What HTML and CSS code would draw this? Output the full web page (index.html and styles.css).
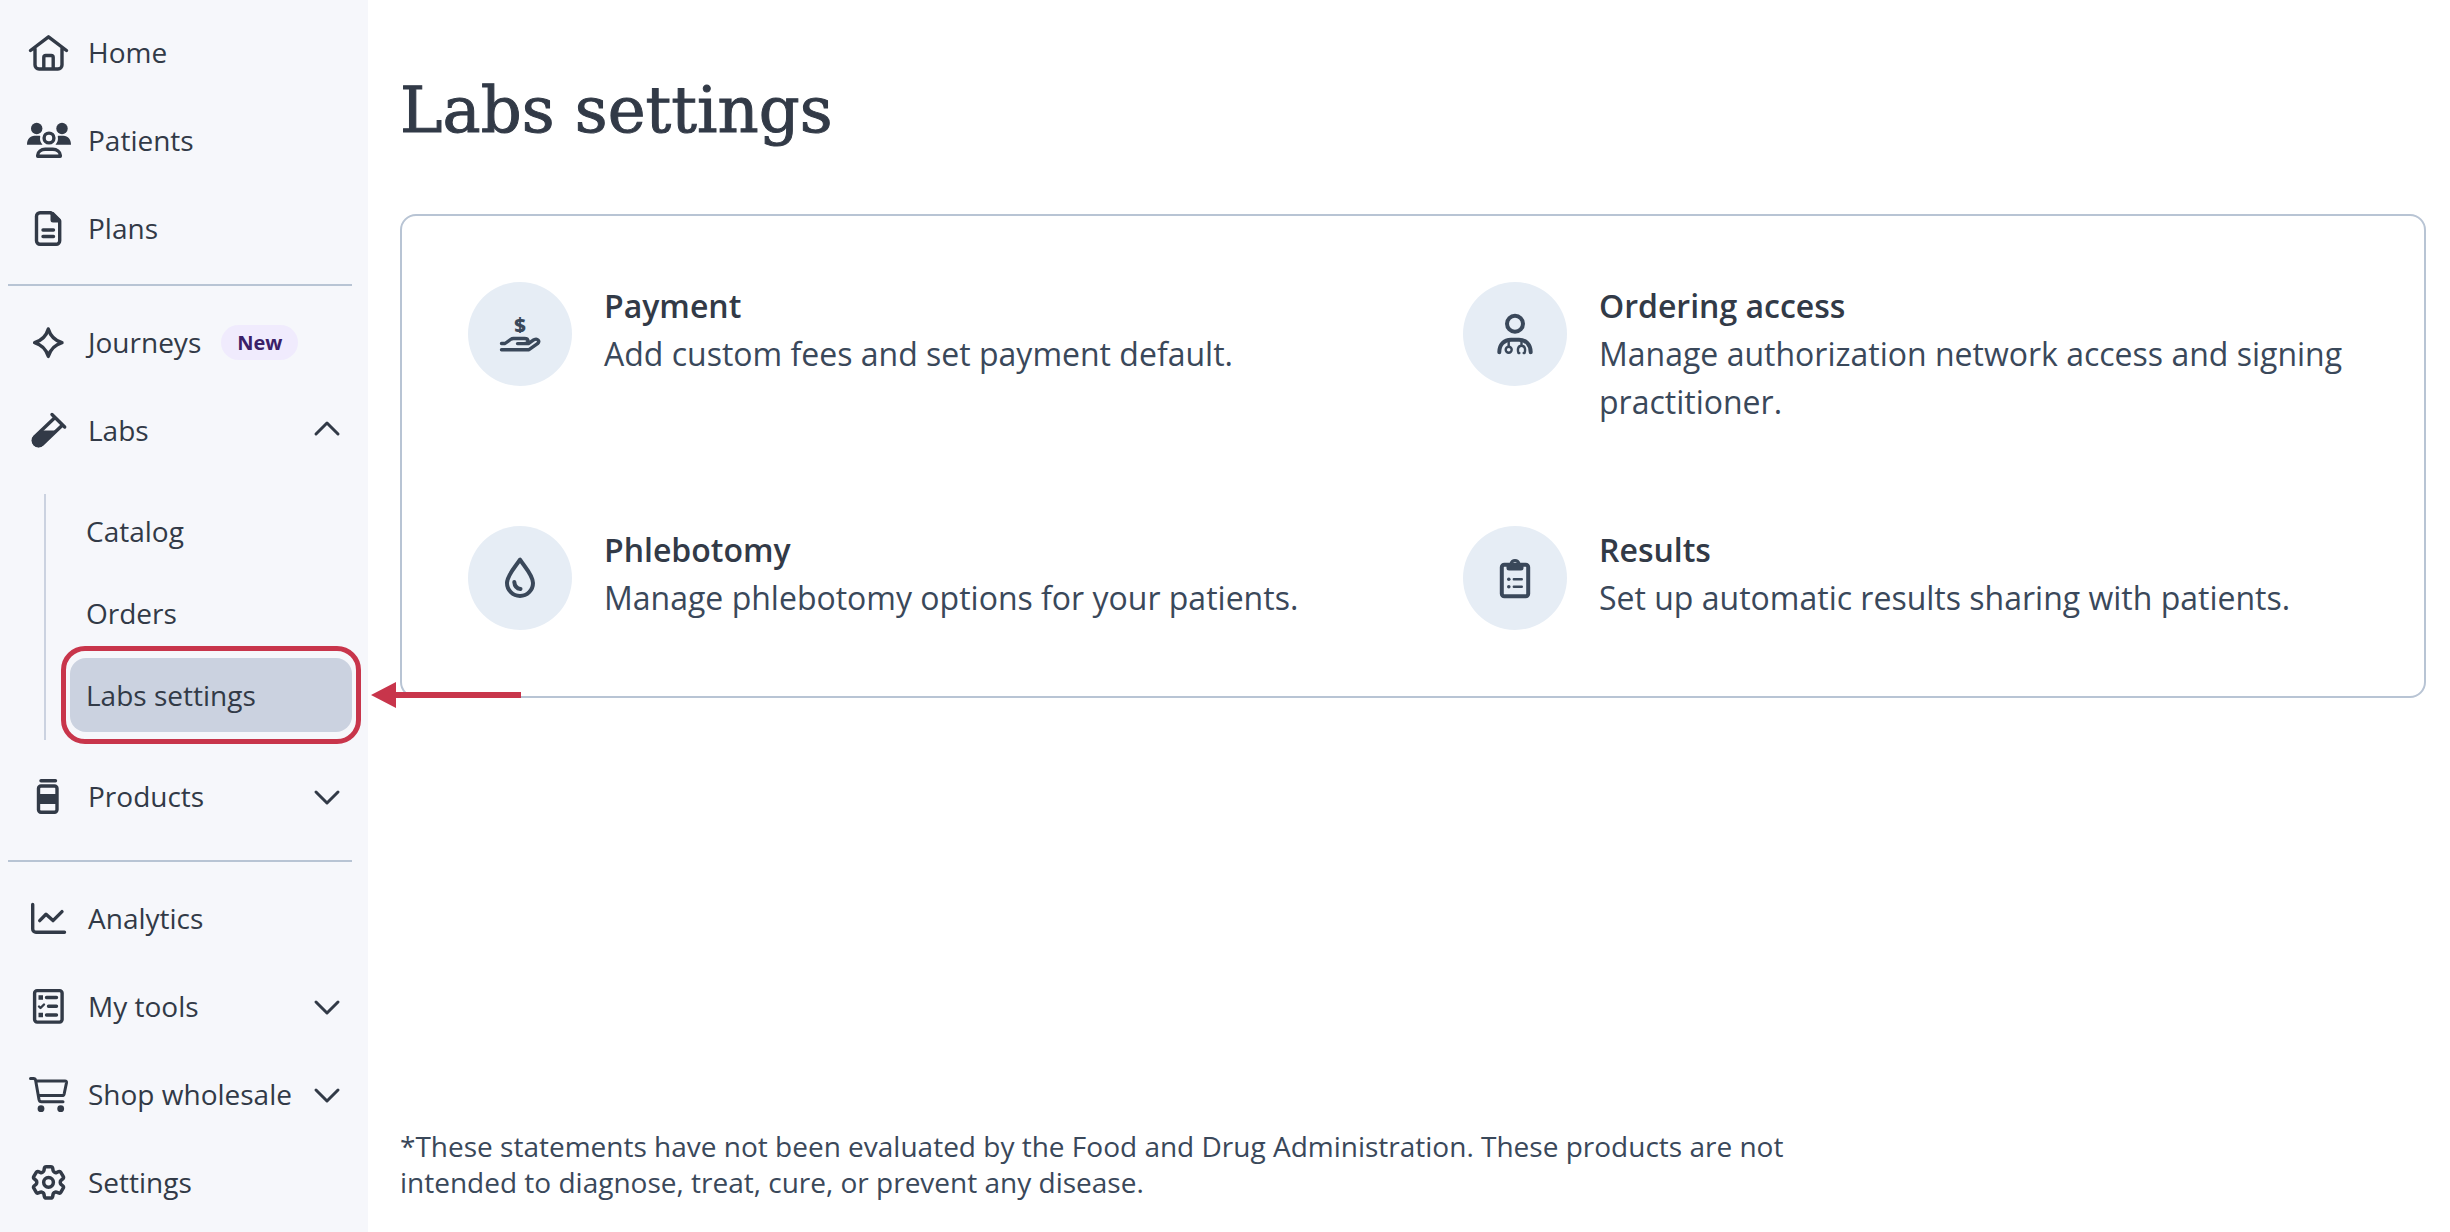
FILE: index.html
```html
<!DOCTYPE html>
<html lang="en">
<head>
    <meta charset="UTF-8">
    <meta name="viewport" content="width=device-width, initial-scale=1.0">
    <title>Labs settings</title>
    <link rel="stylesheet" href="styles.css">
</head>
<body>
    <nav class="sidebar" aria-label="Main">
        <ul class="nav-list">
            <li>
                <a class="nav-item" href="#home">
                    <svg class="nav-icon" viewBox="0 0 48 48"><path d="M6.500 22.500 24.500 8.800l18 13.700M11 20.500v16.500a4 4 0 0 0 4 4h19a4 4 0 0 0 4-4V20.500M19.800 40V29.500a2 2 0 0 1 2-2h5.400a2 2 0 0 1 2 2V40"/></svg>
                    <span>Home</span>
                </a>
            </li>
            <li>
                <a class="nav-item" href="#patients">
                    <svg class="nav-icon" viewBox="0 0 48 48">
                        <g class="solid">
                            <circle cx="12.700" cy="12.500" r="5.700"/>
                            <circle cx="38" cy="12.500" r="5.700"/>
                            <path d="M3 28.700c0-5.500 3-9 7.500-9h4.700c.8 0 1.200.3 1 1-.6 3 .2 5.500 2.300 8zM47 28.700c0-5.500-3-9-7.500-9h-4.700c-.8 0-1.200.3-1 1 .6 3-.2 5.500-2.300 8z"/>
                        </g>
                        <circle cx="25" cy="22" r="4.900"/>
                        <path d="M13.700 40.300v-1c0-3.500 3.500-6 7.500-6h7.600c4 0 7.500 2.500 7.500 6v1z"/>
                    </svg>
                    <span>Patients</span>
                </a>
            </li>
            <li>
                <a class="nav-item" href="#plans">
                    <svg class="nav-icon" viewBox="0 0 48 48">
                        <path d="M27 8.800H16a3.500 3.500 0 0 0-3.500 3.500v24.500a3.500 3.500 0 0 0 3.500 3.500h16.200a3.500 3.500 0 0 0 3.500-3.500V17zM19 26h10.500M19 32.500h10.500"/>
                        <path class="solid" d="M26.500 8h3l7.500 7.500v3h-8a2.500 2.500 0 0 1-2.500-2.500z"/>
                    </svg>
                    <span>Plans</span>
                </a>
            </li>
        </ul>
        <hr class="divider">
        <ul class="nav-list">
            <li>
                <a class="nav-item" href="#journeys">
                    <svg class="nav-icon" viewBox="0 0 48 48"><path d="M24.300 11q3 10.400 13.700 13.700Q27.300 28 24.300 38.400 21.300 28 10.600 24.700 21.300 21.400 24.300 11z"/></svg>
                    <span>Journeys</span>
                    <span class="badge">New</span>
                </a>
            </li>
            <li>
                <button class="nav-item" type="button" aria-expanded="true" aria-controls="labs-menu">
                    <svg class="nav-icon" viewBox="0 0 48 48">
                        <path d="M28 8.500 40.700 21M30.500 12 10.800 30.800a5.300 5.300 0 0 0 7.500 7.500L38 19.500"/>
                        <path class="solid" d="M17 24.500h16.500L19.500 39a6.500 6.500 0 0 1-10-9z"/>
                    </svg>
                    <span>Labs</span>
                    <svg class="chevron" viewBox="0 0 32 32"><path d="m4 20 11-11 11 11"/></svg>
                </button>
                <ul class="submenu" id="labs-menu">
                    <li><a class="submenu-item" href="#catalog">Catalog</a></li>
                    <li><a class="submenu-item" href="#orders">Orders</a></li>
                    <li>
                        <a class="submenu-item active" href="#labs-settings" aria-current="page">
                            Labs settings
                            <svg class="pointer" viewBox="0 0 150 26" aria-hidden="true"><path d="M0 13 25 0v10h125v6H25v10z"/></svg>
                        </a>
                    </li>
                </ul>
            </li>
            <li>
                <button class="nav-item" type="button" aria-expanded="false">
                    <svg class="nav-icon" viewBox="0 0 48 48">
                        <path d="M17 8.700h14.500"/>
                        <rect x="14.500" y="14" width="18.500" height="26.300" rx="2.500"/>
                        <path class="solid" d="M14 22h20v10H14z"/>
                    </svg>
                    <span>Products</span>
                    <svg class="chevron" viewBox="0 0 32 32"><path d="m4 12 11 11 11-11"/></svg>
                </button>
            </li>
        </ul>
        <hr class="divider divider-wide">
        <ul class="nav-list">
            <li>
                <a class="nav-item" href="#analytics">
                    <svg class="nav-icon" viewBox="0 0 48 48"><path d="M8.700 10.500V35a3.300 3.300 0 0 0 3.300 3.300h28.500M15.700 26.600l6.300-6.400 7 6.400 9-9"/></svg>
                    <span>Analytics</span>
                </a>
            </li>
            <li>
                <button class="nav-item" type="button" aria-expanded="false">
                    <svg class="nav-icon" viewBox="0 0 48 48">
                        <rect x="10.600" y="8.600" width="27.500" height="31.500" rx="2.500"/>
                        <path d="M22.500 15.500h10M24.500 24.300h8M22.500 33h10"/>
                        <path class="solid" d="M14.500 13.200h4.500v4.500h-4.500zM14.500 30.800h4.500v4.500h-4.500z"/>
                        <path class="thin" d="m15 24.500 1.500 1.500 3.500-3.500"/>
                    </svg>
                    <span>My tools</span>
                    <svg class="chevron" viewBox="0 0 32 32"><path d="m4 12 11 11 11-11"/></svg>
                </button>
            </li>
            <li>
                <button class="nav-item" type="button" aria-expanded="false">
                    <svg class="nav-icon" viewBox="0 0 48 48">
                        <path class="medium" d="M6.500 8.500h3c1.200 0 1.900.7 2.100 1.800L15 29.500c.3 1.500 1 2.300 2.500 2.300h21.500M12 11h29c1.200 0 1.700.7 1.500 1.800l-2.300 11c-.3 1.200-1 1.700-2.200 1.700H14.500"/>
                        <g class="solid"><circle cx="17" cy="38.700" r="3.400"/><circle cx="36.700" cy="38.700" r="3.400"/></g>
                    </svg>
                    <span>Shop wholesale</span>
                    <svg class="chevron" viewBox="0 0 32 32"><path d="m4 12 11 11 11-11"/></svg>
                </button>
            </li>
            <li>
                <a class="nav-item" href="#settings">
                    <svg class="nav-icon gear" viewBox="-2.100 -2 27.600 27.600"><path d="M9.594 3.940c.09-.542.56-.94 1.110-.94h2.593c.55 0 1.020.398 1.110.94l.213 1.281c.063.374.313.686.645.87.074.04.147.083.22.127.325.196.72.257 1.075.124l1.217-.456a1.125 1.125 0 0 1 1.370.49l1.296 2.247a1.125 1.125 0 0 1-.26 1.431l-1.003.827c-.293.241-.438.613-.43.992a7.723 7.723 0 0 1 0 .255c-.008.378.137.75.43.991l1.004.827c.424.35.534.955.26 1.430l-1.298 2.247a1.125 1.125 0 0 1-1.369.491l-1.217-.456c-.355-.133-.75-.072-1.076.124a6.470 6.470 0 0 1-.22.128c-.331.183-.581.495-.644.869l-.213 1.281c-.09.543-.56.94-1.110.94h-2.594c-.55 0-1.019-.398-1.110-.94l-.213-1.281c-.062-.374-.312-.686-.644-.87a6.520 6.520 0 0 1-.22-.127c-.325-.196-.72-.257-1.076-.124l-1.217.456a1.125 1.125 0 0 1-1.369-.49l-1.297-2.247a1.125 1.125 0 0 1 .26-1.431l1.004-.827c.292-.24.437-.613.43-.991a6.932 6.932 0 0 1 0-.255c.007-.38-.138-.751-.43-.992l-1.004-.827a1.125 1.125 0 0 1-.26-1.430l1.297-2.247a1.125 1.125 0 0 1 1.370-.491l1.216.456c.356.133.751.072 1.076-.124.072-.044.146-.086.22-.128.332-.183.582-.495.644-.869l.214-1.280Z"/><circle cx="12" cy="12" r="2.800"/></svg>
                    <span>Settings</span>
                </a>
            </li>
        </ul>
    </nav>

    <div class="page">
        <main>
            <h1>Labs settings</h1>
            <div class="card">
                <a class="option" href="#payment">
                    <span class="option-icon">
                        <svg viewBox="0 0 48 48">
                            <text x="24" y="22" text-anchor="middle">$</text>
                            <path d="M5.500 33.500h3.500l5.500-4c1-.7 2-1 3-1h11c2.200 0 3.500 1 3.500 2.600s-1.300 2.500-3 2.500h-7.500M29 33.500h3.500l5.500-3.800c3.500-1.700 6.300 1.300 3.500 4L33 39.700H5.500"/>
                        </svg>
                    </span>
                    <span class="option-text">
                        <strong>Payment</strong>
                        <span>Add custom fees and set payment default.</span>
                    </span>
                </a>
                <a class="option" href="#ordering-access">
                    <span class="option-icon">
                        <svg viewBox="0 0 48 48">
                            <circle class="bold" cx="24" cy="13.700" r="8"/>
                            <path class="bold" d="M8.300 42.200c0-7.700 4.700-12.500 11.700-12.500h8c7 0 11.700 4.800 11.700 12.500"/>
                            <path class="thin" d="M17.700 30.500v6M30.500 30.500v5M28.300 43h-.8c-1.200-3.500-.6-7.300 3-7.300s4.200 3.800 3 7.300h-.8"/>
                            <circle class="thin" cx="17.700" cy="39.700" r="3"/>
                        </svg>
                    </span>
                    <span class="option-text">
                        <strong>Ordering access</strong>
                        <span>Manage authorization network access and signing practitioner.</span>
                    </span>
                </a>
                <a class="option" href="#phlebotomy">
                    <span class="option-icon">
                        <svg viewBox="0 0 48 48"><path class="bold" d="M24 5.700c-4.500 7-13 15.500-13 23.300a13 13 0 0 0 26 0C37 21.200 28.500 12.700 24 5.700zM18.300 28c.3 4 2.500 6.500 6.200 7"/></svg>
                    </span>
                    <span class="option-text">
                        <strong>Phlebotomy</strong>
                        <span>Manage phlebotomy options for your patients.</span>
                    </span>
                </a>
                <a class="option" href="#results">
                    <span class="option-icon">
                        <svg viewBox="0 0 48 48">
                            <rect class="bold" x="10.800" y="10.800" width="26.400" height="31.400" rx="2.500"/>
                            <path class="solid" fill-rule="evenodd" d="M15.500 9h3.200a5.500 5.500 0 0 1 10.600 0h3.200v5a2.500 2.500 0 0 1-2.500 2.500H18a2.500 2.500 0 0 1-2.500-2.500zM24 8a2 2 0 1 0 0 4 2 2 0 1 0 0-4z"/>
                            <path class="thin" d="M22.800 25.200h8M22.800 32.700h8"/>
                            <g class="solid"><circle cx="17.800" cy="25.200" r="1.800"/><circle cx="17.800" cy="32.700" r="1.800"/></g>
                        </svg>
                    </span>
                    <span class="option-text">
                        <strong>Results</strong>
                        <span>Set up automatic results sharing with patients.</span>
                    </span>
                </a>
            </div>
        </main>
        <footer>
            <p>*These statements have not been evaluated by the Food and Drug Administration. These products are not intended to diagnose, treat, cure, or prevent any disease.</p>
        </footer>
    </div>
</body>
</html>
```

FILE: styles.css
```css
* {
    box-sizing: border-box;
}

body {
    margin: 0;
    min-height: 100vh;
    display: flex;
    font-family: "Open Sans", "Noto Sans", sans-serif;
    font-size: 28px;
    color: #3a485a;
    background: #fff;
}

ul {
    list-style: none;
    margin: 0;
    padding: 0;
}

a {
    color: inherit;
    text-decoration: none;
}

svg {
    flex: none;
    fill: none;
    stroke: currentColor;
    stroke-width: 3.4;
    stroke-linecap: round;
    stroke-linejoin: round;
}

svg .solid {
    fill: currentColor;
    stroke: none;
}

svg .thin {
    stroke-width: 2.4;
}

svg .medium {
    stroke-width: 3;
}

svg .bold {
    stroke-width: 4;
}

/* Sidebar */
.sidebar {
    flex: none;
    width: 368px;
    padding: 8px 0 4px;
    background: #f6f7fb;
    color: #323a47;
    font-weight: 500;
}

.nav-item {
    display: flex;
    align-items: center;
    gap: 16px;
    width: 100%;
    height: 88px;
    padding: 0 24px;
    border: none;
    background: none;
    color: inherit;
    font: inherit;
    text-align: left;
    white-space: nowrap;
    cursor: pointer;
}

.nav-icon {
    width: 48px;
    height: 48px;
}

.gear {
    stroke-width: 2;
}

.chevron {
    width: 32px;
    height: 32px;
    margin-left: auto;
    stroke-width: 3;
}

.badge {
    margin-left: 4px;
    padding: 0 16px;
    border-radius: 18px;
    background: #f0ebfd;
    color: #3b2068;
    font-size: 20px;
    font-weight: 700;
    line-height: 35px;
}

.divider {
    height: 2px;
    margin: 12px 16px 12px 8px;
    border: none;
    background: #b8c4d4;
}

.divider-wide {
    margin-top: 20px;
}

.submenu {
    margin: 20px 16px 12px 44px;
    padding-left: 24px;
    border-left: 2px solid #cbd2e0;
}

.submenu li {
    padding-bottom: 8px;
}

.submenu-item {
    position: relative;
    display: block;
    padding: 0 16px;
    border-radius: 16px;
    line-height: 74px;
}

.active {
    background: #cbd2e0;
}

/* Callout around the current page link */
.active::after {
    content: '';
    position: absolute;
    inset: -12px -9px;
    border: 5px solid #c8354b;
    border-radius: 24px;
}

.pointer {
    position: absolute;
    top: 24px;
    left: calc(100% + 19px);
    width: 150px;
    height: 26px;
    fill: #c8354b;
    stroke: none;
    z-index: 1;
}

/* Page content */
.page {
    flex: 1;
    display: flex;
    flex-direction: column;
    padding: 70px 24px 32px 32px;
}

h1 {
    margin: 0 0 64px;
    color: #323a47;
    font-family: "DejaVu Serif", serif;
    font-size: 64px;
    font-weight: 400;
    line-height: 80px;
    -webkit-text-stroke: 1px;
}

.card {
    display: grid;
    grid-template-columns: 1fr 1fr;
    gap: 100px;
    padding: 66px;
    border: 2px solid #b8c4d4;
    border-radius: 16px;
}

.option {
    display: flex;
    align-items: flex-start;
    gap: 32px;
    font-size: 32px;
    line-height: 48px;
}

.option-icon {
    flex: none;
    display: flex;
    align-items: center;
    justify-content: center;
    width: 104px;
    height: 104px;
    border-radius: 50%;
    background: #e6edf5;
}

.option-icon svg {
    width: 48px;
    height: 48px;
}

.option-icon text {
    fill: currentColor;
    stroke: none;
    font-size: 20px;
    font-weight: 800;
}

.option-text strong {
    display: block;
    color: #323a47;
    font-weight: 600;
}

footer {
    margin-top: auto;
}

footer p {
    max-width: 1400px;
    margin: 0;
    line-height: 36px;
}
```
